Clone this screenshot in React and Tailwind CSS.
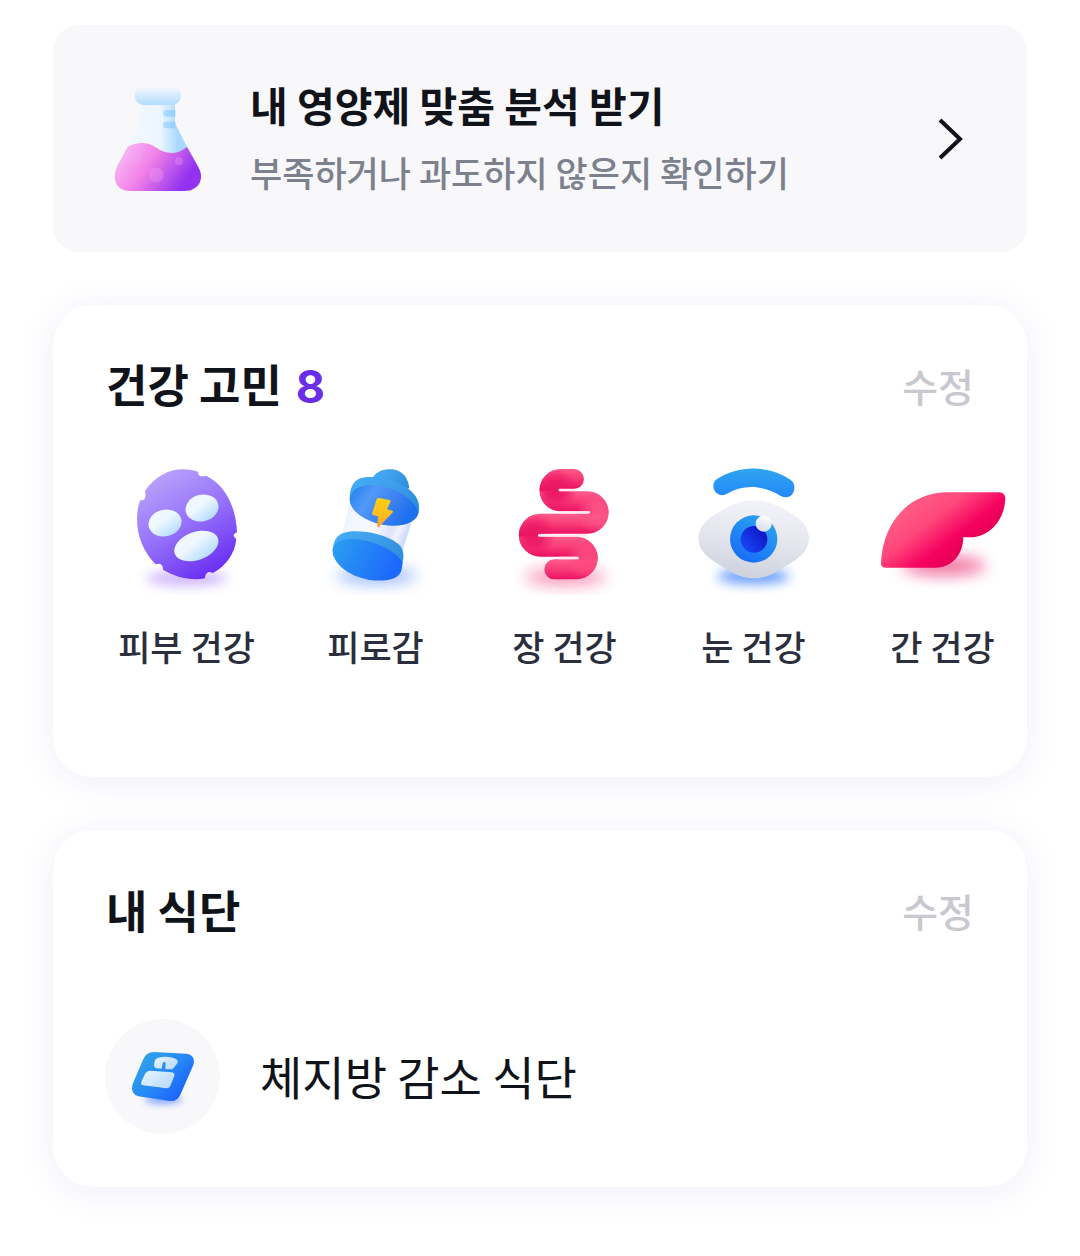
import { useId } from 'react'

// --- Icons ---
const FlaskIcon = () => (
  <svg viewBox="0 0 420 420" className="h-[140px] w-[140px] shrink-0" aria-hidden="true">
    <defs>
      <linearGradient id="flask-lip" x1="0" y1="0" x2="0" y2="1">
        <stop offset="0" stopColor="#f5f8fe" />
        <stop offset="1" stopColor="#b3dcfd" />
      </linearGradient>
      <linearGradient id="flask-glass" gradientUnits="userSpaceOnUse" x1="150" y1="0" x2="275" y2="0">
        <stop offset="0" stopColor="#f1f7ff" />
        <stop offset="0.5" stopColor="#ecf5ff" />
        <stop offset="0.9" stopColor="#a9d9fe" />
      </linearGradient>
      <linearGradient id="flask-liquid" gradientUnits="userSpaceOnUse" x1="105" y1="240" x2="290" y2="365">
        <stop offset="0" stopColor="#f8b4f5" />
        <stop offset="0.38" stopColor="#f07fe8" />
        <stop offset="0.9" stopColor="#9333f0" />
      </linearGradient>
      <linearGradient id="flask-mark" x1="0" y1="0" x2="1" y2="0">
        <stop offset="0" stopColor="#b5defe" />
        <stop offset="1" stopColor="#90cfff" />
      </linearGradient>
    </defs>
    <path d="M153 95H255V160L291 230L250 265H150L113 230L153 165Z" fill="url(#flask-glass)" />
    <rect x="134" y="50" width="139" height="55" rx="27" fill="url(#flask-lip)" />
    <path d="M256 120H229a10 10 0 0 0 0 20H256ZM256 155H229a10 10 0 0 0 0 20H256Z" fill="url(#flask-mark)" />
    <path
      d="M113 230C140 215 175 215 197 232C230 256 263 254 291 230L325 291C347 330 322 363 285 363H120C80 363 63 328 82 288Z"
      fill="url(#flask-liquid)"
    />
    <g fill="#f6a8f5" opacity="0.3">
      <circle cx="139" cy="262" r="18" />
      <circle cx="199" cy="315" r="22" />
      <circle cx="267" cy="274" r="12" />
    </g>
  </svg>
)

const Shadow = ({ cx, cy, rx, ry, color, opacity = 0.5, blur = 16 }) => {
  const id = useId()
  return (
    <>
      <filter id={id} x="-50%" y="-200%" width="200%" height="500%">
        <feGaussianBlur stdDeviation={blur} />
      </filter>
      <ellipse cx={cx} cy={cy} rx={rx} ry={ry} fill={color} opacity={opacity} filter={`url(#${id})`} />
    </>
  )
}

const SkinIcon = () => (
  <svg viewBox="-9 0 420 420" className="h-[140px] w-[140px]" aria-hidden="true">
    <defs>
      <linearGradient id="skin-face" x1="0.25" y1="0.05" x2="0.75" y2="0.95">
        <stop offset="0" stopColor="#b79ffb" />
        <stop offset="0.5" stopColor="#9470fa" />
        <stop offset="1" stopColor="#6b2ff2" />
      </linearGradient>
      <linearGradient id="skin-hole" x1="0.2" y1="0.1" x2="0.7" y2="1">
        <stop offset="0.35" stopColor="#f0f8ff" />
        <stop offset="1" stopColor="#b4dcfe" />
      </linearGradient>
    </defs>
    <Shadow cx={200} cy={370} rx={122} ry={22} color="#8b4df5" opacity={0.42} blur={18} />
    <path
      d="M75 108C105 65 145 43 190 43C206 43 222 46 234 50C234 63 243 67 258 62C310 87 347 145 351 232C338 237 338 245 349 251C345 296 318 333 278 354C266 346 256 353 255 370C211 378 167 366 129 344C129 328 121 323 107 328C71 291 50 242 51 188C52 166 55 149 61 136C74 137 80 128 75 108Z"
      fill="url(#skin-face)"
    />
    <g fill="url(#skin-hole)">
      <ellipse cx="135" cy="204" rx="50" ry="40" transform="rotate(-12 135 204)" />
      <ellipse cx="246" cy="159" rx="50" ry="40" transform="rotate(-14 246 159)" />
      <ellipse cx="229" cy="273" rx="69" ry="42" transform="rotate(-20 229 273)" />
    </g>
  </svg>
)

const FatigueIcon = () => (
  <svg viewBox="-12 0 420 420" className="h-[140px] w-[140px]" aria-hidden="true">
    <defs>
      <linearGradient id="bat-cap" x1="0" y1="0" x2="1" y2="0.5">
        <stop offset="0" stopColor="#45aef5" />
        <stop offset="0.5" stopColor="#3fa0ee" />
        <stop offset="1" stopColor="#308fdc" />
      </linearGradient>
      <linearGradient id="bat-inner" x1="0" y1="0" x2="1" y2="0.4">
        <stop offset="0" stopColor="#1f80ec" />
        <stop offset="0.35" stopColor="#5199f8" />
        <stop offset="0.7" stopColor="#3a80f2" />
        <stop offset="1" stopColor="#1c70ee" />
      </linearGradient>
      <linearGradient id="bat-base" x1="0" y1="0" x2="1" y2="0.3">
        <stop offset="0" stopColor="#2ba0f1" />
        <stop offset="1" stopColor="#1d69fb" />
      </linearGradient>
      <linearGradient id="bat-glass" x1="0" y1="0" x2="1" y2="0.3">
        <stop offset="0" stopColor="#cfe2fc" />
        <stop offset="0.15" stopColor="#eef4ff" />
        <stop offset="0.55" stopColor="#fafaff" />
        <stop offset="0.78" stopColor="#dde2fc" />
        <stop offset="0.88" stopColor="#f2f3ff" />
        <stop offset="1" stopColor="#cfdbfb" />
      </linearGradient>
      <linearGradient id="bat-bolt" x1="0" y1="0" x2="0" y2="1">
        <stop offset="0" stopColor="#ffd112" />
        <stop offset="0.6" stopColor="#fdbd1e" />
        <stop offset="1" stopColor="#fb9631" />
      </linearGradient>
    </defs>
    <Shadow cx={200} cy={362} rx={120} ry={25} color="#3d78f5" opacity={0.5} blur={22} />
    <path d="M120 145L92 250C150 310 220 320 277 290L307 195Z" fill="url(#bat-glass)" />
    <path d="M188 68C200 48 223 41 248 43C276 46 295 68 298 100L240 112Z" fill="url(#bat-cap)" />
    <path
      d="M119 130C119 93 134 70 165 67C216 62 282 84 309 114C325 132 331 150 325 172C315 200 270 215 215 203C160 188 119 165 119 130Z"
      fill="url(#bat-cap)"
    />
    <path
      d="M119 133C123 104 149 88 188 90C250 93 310 127 326 171C322 203 275 220 217 209C160 197 119 166 119 133Z"
      fill="url(#bat-inner)"
    />
    <path
      d="M68 283C72 249 85 234 116 230C168 225 225 239 261 264C277 276 283 292 279 315L274 342L70 302Z"
      fill="url(#bat-cap)"
    />
    <path
      d="M68 283C72 263 94 251 127 252C190 255 253 283 278 323L274 347C267 373 225 382 175 374C113 363 65 323 68 283Z"
      fill="url(#bat-base)"
    />
    <path
      d="M206 129L238 135Q243 136 241 141L231 163L247 167Q251 169 247 173L207 216Q202 220 202 213L204 184L189 180Q185 178 187 173L200 133Q202 129 206 129Z"
      fill="url(#bat-bolt)"
    />
  </svg>
)

const gutPath =
  'M222 72H182a33.5 33.5 0 0 0 0 67H262a33.5 33.5 0 0 1 0 67H121a34.5 34.5 0 0 0 0 69H229a34 34 0 0 1 0 68H163'

const gutBends = [
  { id: 'gut-bend-1', cx: 166, cy: 105, color: '#ec1764' },
  { id: 'gut-bend-2', cx: 298, cy: 172, color: '#fd5486' },
  { id: 'gut-bend-3', cx: 100, cy: 241, color: '#ec1764' },
  { id: 'gut-bend-4', cx: 264, cy: 309, color: '#fb4a80' },
]

const GutIcon = () => (
  <svg viewBox="-15 0 420 420" className="h-[140px] w-[140px]" aria-hidden="true">
    <defs>
      <linearGradient id="gut-tube" gradientUnits="userSpaceOnUse" x1="0" y1="42" x2="0" y2="110" spreadMethod="repeat">
        <stop offset="0" stopColor="#ff5c8b" />
        <stop offset="0.45" stopColor="#f83a77" />
        <stop offset="0.88" stopColor="#ec1060" />
        <stop offset="0.95" stopColor="#ec1060" />
        <stop offset="1" stopColor="#ff5c8b" />
      </linearGradient>
      {gutBends.map(({ id, cx, cy, color }) => (
        <radialGradient key={id} id={id} gradientUnits="userSpaceOnUse" cx={cx} cy={cy} r="68">
          <stop offset="0" stopColor={color} />
          <stop offset="0.4" stopColor={color} stopOpacity="0.85" />
          <stop offset="1" stopColor={color} stopOpacity="0" />
        </radialGradient>
      ))}
    </defs>
    <Shadow cx={196} cy={366} rx={120} ry={25} color="#f0135f" opacity={0.45} blur={22} />
    <g fill="none" strokeWidth="60" strokeLinecap="round">
      <path d={gutPath} stroke="url(#gut-tube)" />
      <path d={gutPath} stroke="url(#gut-bend-1)" />
      <path d={gutPath} stroke="url(#gut-bend-2)" />
      <path d={gutPath} stroke="url(#gut-bend-3)" />
      <path d={gutPath} stroke="url(#gut-bend-4)" />
    </g>
    <path d="M176 105H228M176 172H270M114 241H262M176 309H236" stroke="#ffe8ef" strokeWidth="7" fill="none" />
  </svg>
)

const EyeIcon = () => (
  <svg viewBox="-3 0 420 420" className="h-[140px] w-[140px]" aria-hidden="true">
    <defs>
      <linearGradient id="eye-brow" x1="0" y1="0" x2="0" y2="1">
        <stop offset="0" stopColor="#2fa5ee" />
        <stop offset="1" stopColor="#2388fb" />
      </linearGradient>
      <linearGradient id="eye-white" x1="0.6" y1="0" x2="0.4" y2="1">
        <stop offset="0" stopColor="#f3f3fb" />
        <stop offset="0.5" stopColor="#e4e6ee" />
        <stop offset="1" stopColor="#ccd1dc" />
      </linearGradient>
      <linearGradient id="eye-iris" x1="0.8" y1="0" x2="0.2" y2="1">
        <stop offset="0" stopColor="#2ba6ec" />
        <stop offset="1" stopColor="#186afa" />
      </linearGradient>
      <linearGradient id="eye-pupil" x1="0.9" y1="0.2" x2="0.1" y2="0.8">
        <stop offset="0" stopColor="#0f14c4" />
        <stop offset="1" stopColor="#1746f5" />
      </linearGradient>
      <linearGradient id="eye-glint" x1="0.7" y1="0" x2="0.3" y2="1">
        <stop offset="0" stopColor="#ffffff" />
        <stop offset="1" stopColor="#d6dbe6" />
      </linearGradient>
    </defs>
    <Shadow cx={205} cy={364} rx={108} ry={22} color="#1f6bff" opacity={0.7} blur={18} />
    <path
      d="M95 73C160 30 252 30 316 74C328 82 331 95 326 110C319 127 303 131 287 123C235 90 175 88 129 115C112 125 96 121 88 106C82 94 85 80 95 73Z"
      fill="url(#eye-brow)"
    />
    <path
      d="M40 250C42 220 56 198 88 179C125 157 160 136 206 136C252 136 288 157 325 179C356 198 371 221 372 250C371 282 351 304 322 321C282 345 252 370 206 370C160 370 130 345 90 321C59 302 41 281 40 250Z"
      fill="url(#eye-white)"
    />
    <circle cx="206" cy="252" r="71" fill="url(#eye-iris)" />
    <circle cx="207" cy="253" r="40" fill="url(#eye-pupil)" />
    <circle cx="236" cy="206" r="24" fill="url(#eye-glint)" />
  </svg>
)

const LiverIcon = () => (
  <svg viewBox="9 -45 420 420" className="h-[140px] w-[140px]" aria-hidden="true">
    <defs>
      <linearGradient id="liver-body" gradientUnits="userSpaceOnUse" x1="135" y1="90" x2="255" y2="245">
        <stop offset="0" stopColor="#ff5c84" />
        <stop offset="0.4" stopColor="#ff477c" />
        <stop offset="0.82" stopColor="#f5025f" />
        <stop offset="1" stopColor="#ea0059" />
      </linearGradient>
    </defs>
    <Shadow cx={222} cy={288} rx={125} ry={28} color="#e8115d" opacity={0.6} blur={22} />
    <path
      d="M33 280C37 160 115 67 232 67H388Q405 67 406 87C403 150 360 201 301 202H280C279 255 246 292 198 293H46Q33 293 33 280Z"
      fill="url(#liver-body)"
    />
  </svg>
)

const ScaleIcon = () => (
  <svg viewBox="30 27 345 345" className="h-[115px] w-[115px]" aria-hidden="true">
    <defs>
      <linearGradient id="scale-body" x1="0.1" y1="0.2" x2="0.85" y2="0.8">
        <stop offset="0" stopColor="#2fa2e8" />
        <stop offset="0.5" stopColor="#278af5" />
        <stop offset="1" stopColor="#1c64fc" />
      </linearGradient>
      <linearGradient id="scale-plate" x1="0" y1="0" x2="1" y2="0.6">
        <stop offset="0" stopColor="#ecf6ff" />
        <stop offset="1" stopColor="#bbdcfd" />
      </linearGradient>
    </defs>
    <Shadow cx={205} cy={268} rx={56} ry={13} color="#2f6bff" opacity={0.6} blur={11} />
    <path
      d="M176 126L274 131Q303 136 295 165L257 252Q247 276 224 273L130 259Q106 250 112 224L145 147Q155 126 176 126Z"
      fill="url(#scale-body)"
    />
    <path
      d="M190 143C210 138 232 140 246 149Q251 154 247 160L236 174Q232 179 226 178L211 177L212 160Q208 151 203 160L200 176L184 175Q177 174 177 166L179 153Q181 145 190 143Z"
      fill="url(#scale-plate)"
    />
    <path
      d="M165 182L231 187Q240 189 238 197L226 228Q222 236 214 235L145 226Q136 224 139 215L151 190Q156 182 165 182Z"
      fill="url(#scale-plate)"
    />
  </svg>
)

const ChevronIcon = () => (
  <svg
    viewBox="0 0 26 42"
    className="mb-0.5 h-[42px] w-[26px] shrink-0"
    fill="none"
    stroke="#10131a"
    strokeWidth="4"
    aria-hidden="true"
  >
    <path d="M2 2L22 21L2 40" />
  </svg>
)

// --- Data ---
const concerns = [
  { label: '피부 건강', Icon: SkinIcon },
  { label: '피로감', Icon: FatigueIcon },
  { label: '장 건강', Icon: GutIcon },
  { label: '눈 건강', Icon: EyeIcon },
  { label: '간 건강', Icon: LiverIcon },
]

// --- Shared pieces ---
const Card = ({ title, count, children }) => (
  <section className="overflow-hidden rounded-[40px] bg-white pt-[47px] shadow-[0_4px_36px_rgba(80,70,190,0.09)]">
    <div className="flex h-[66px] items-center justify-between px-[53px]">
      <h2 className="text-[45px] leading-[66px] font-bold">
        {title}
        {count && <span className="ml-3.5 font-['Inter'] text-[#6b2ee8]">{count}</span>}
      </h2>
      <button type="button" className="cursor-pointer text-[39px] leading-[60px] font-medium text-[#c8c9ce]">
        수정
      </button>
    </div>
    {children}
  </section>
)

const App = () => (
  <main className="flex flex-col gap-[53px] bg-white px-[53px] pt-[25px] pb-[69px] font-['Noto_Sans_CJK_KR',sans-serif] text-[#10131a]">
    <a href="#analysis" className="flex items-center rounded-[26px] bg-[#f8f8fb] pt-[45px] pr-[63px] pb-[42px] pl-[37px]">
      <FlaskIcon />
      <span className="ml-5 flex min-w-0 flex-1 flex-col gap-2 pb-1">
        <span className="text-[41px] leading-[60px] font-bold">내 영양제 맞춤 분석 받기</span>
        <span className="text-[35px] leading-[60px] font-medium text-[#7c818d]">부족하거나 과도하지 않은지 확인하기</span>
      </span>
      <ChevronIcon />
    </a>

    <Card title="건강 고민" count={8}>
      <ul className="mt-[37px] flex overflow-x-auto pb-[104px] pl-[39px] [scrollbar-width:none]">
        {concerns.map(({ label, Icon }) => (
          <li key={label} className="flex w-[189px] shrink-0 flex-col items-center gap-6">
            <Icon />
            <span className="text-[35px] leading-[54px] font-medium text-[#2b2e3c]">{label}</span>
          </li>
        ))}
      </ul>
    </Card>

    <Card title="내 식단">
      <div className="mt-[76px] flex items-center gap-10 px-[52px] pb-[53px]">
        <div className="shrink-0 overflow-hidden rounded-full bg-[#f8f8fb]">
          <ScaleIcon />
        </div>
        <p className="pb-1 text-[46px] leading-[66px]">체지방 감소 식단</p>
      </div>
    </Card>
  </main>
)

export default App
